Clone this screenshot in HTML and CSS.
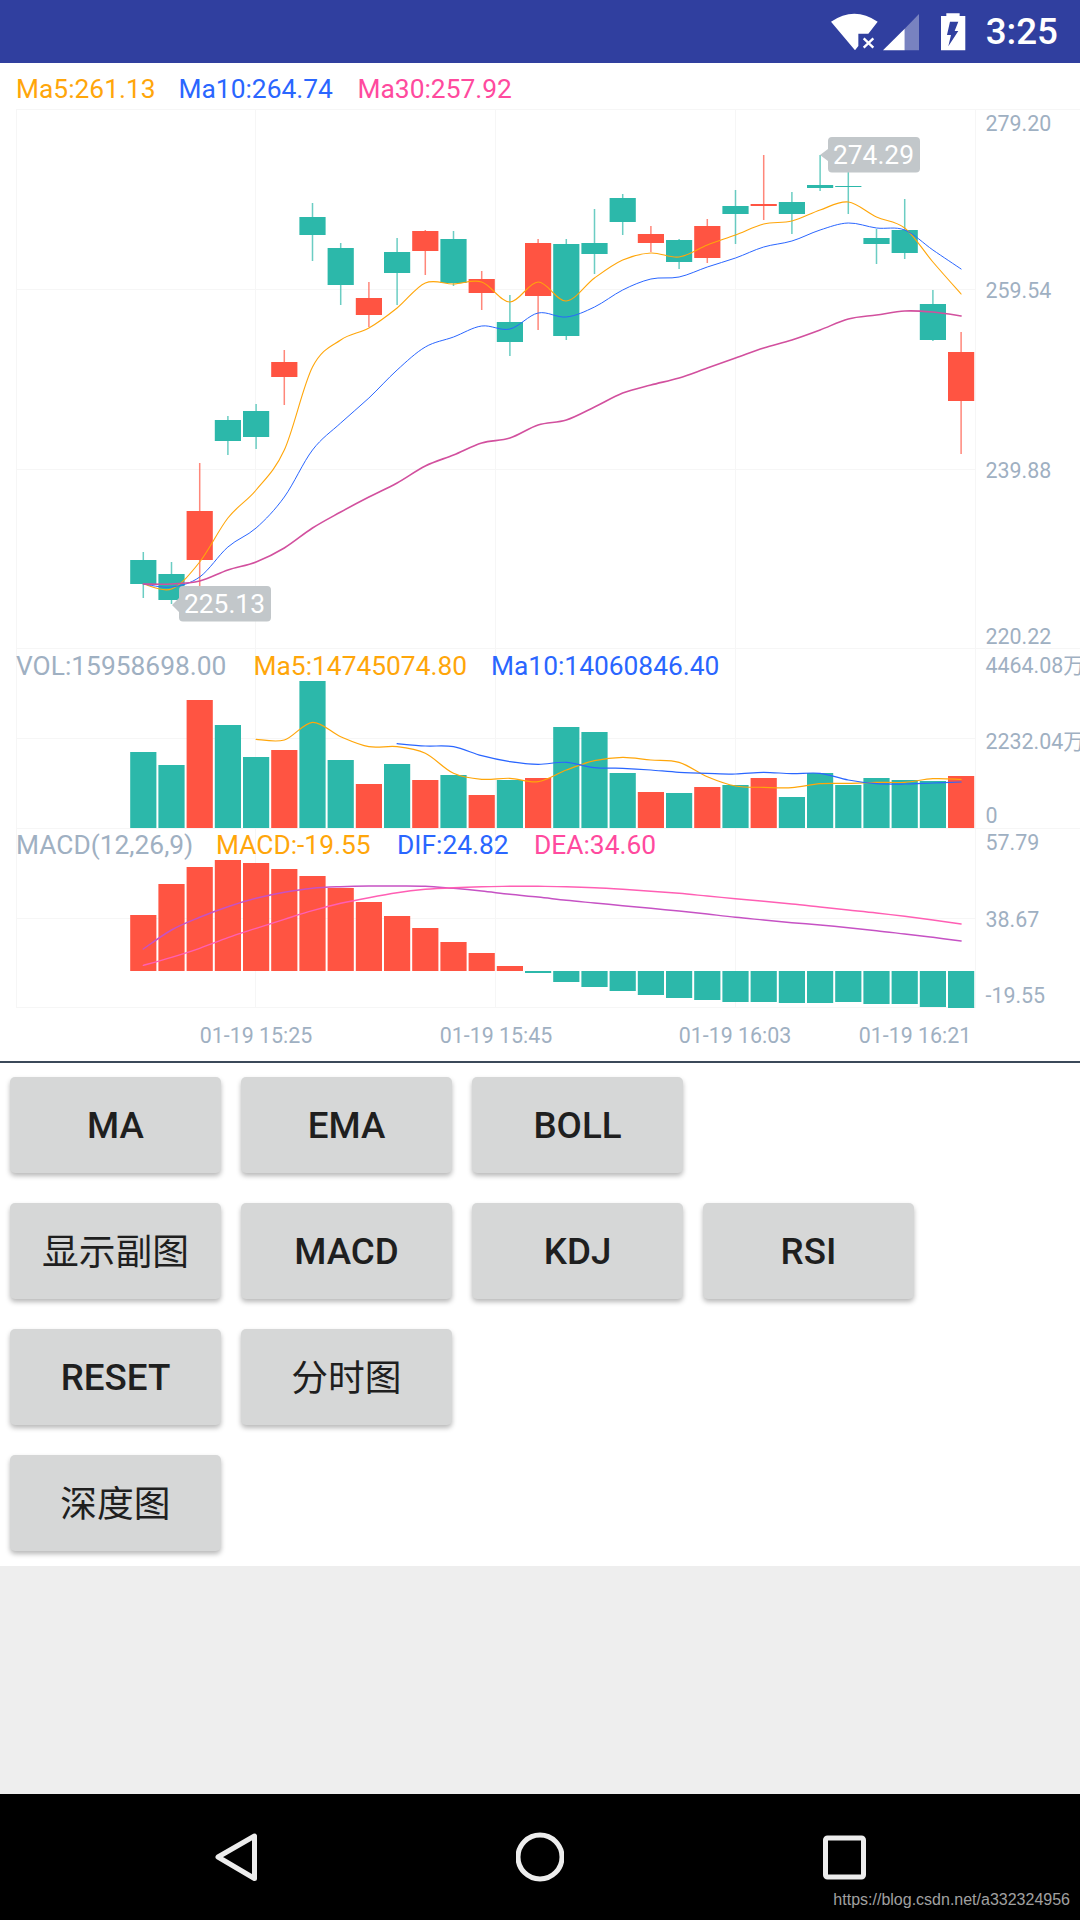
FILE: index.html
```html
<!DOCTYPE html>
<html lang="zh">
<head>
<meta charset="utf-8">
<title>KChart</title>
<link rel="stylesheet" href="styles.css">
</head>
<body>
<div class="screen">
  <header class="status">
    <svg class="ico-wifi" viewBox="158 36 140 114"><path class="w" d="M158 62Q228 14 298 62L270 98H240V135L230 148Z"/><path class="x" d="M256 112L285 140M285 112L256 140"/></svg>
    <svg class="ico-signal" viewBox="313 36 110 114"><path class="w" d="M313 148L378 83V148Z"/><path class="w dim" d="M378 83L423 37V148H378Z"/></svg>
    <svg class="ico-batt" viewBox="489 36 73 114"><path class="w" d="M505 37H545V45H562V148H489V45H505Z"/><path class="bolt" d="M516 62H541L530 90H541L511 136L519 102H507Z"/></svg>
    <span class="clock">3:25</span>
  </header>

  <section class="chart">
    <svg class="kline" viewBox="0 63 1080 998">
      <path class="grid" d="M16 109.500H1080M16 289.500H975M16 469.500H975M16 648.500H1080M16 738.500H975M16 828.500H1080M16 918.500H975M16 1007.500H975M16.500 109V1008M255.500 109V1008M495.500 109V1008M735.500 109V1008M975.500 109V1008"/>
      <g id="plots"></g>

      <text class="leg c-or" x="16" y="98">Ma5:261.13</text>
      <text class="leg c-bl" x="178.500" y="98">Ma10:264.74</text>
      <text class="leg c-pk" x="357.500" y="98">Ma30:257.92</text>

      <text class="leg c-ax" x="16" y="675">VOL:15958698.00</text>
      <text class="leg c-or" x="253.500" y="675">Ma5:14745074.80</text>
      <text class="leg c-bl" x="491" y="675">Ma10:14060846.40</text>

      <text class="leg c-ax" x="16" y="854">MACD(12,26,9)</text>
      <text class="leg c-or" x="216" y="854">MACD:-19.55</text>
      <text class="leg c-bl" x="397" y="854">DIF:24.82</text>
      <text class="leg c-pk" x="534" y="854">DEA:34.60</text>

      <text class="axis" x="985.500" y="131">279.20</text>
      <text class="axis" x="985.500" y="298">259.54</text>
      <text class="axis" x="985.500" y="478">239.88</text>
      <text class="axis" x="985.500" y="644">220.22</text>
      <text class="axis" x="985.500" y="673">4464.08万</text>
      <text class="axis" x="985.500" y="749">2232.04万</text>
      <text class="axis" x="985.500" y="823">0</text>
      <text class="axis" x="985.500" y="850">57.79</text>
      <text class="axis" x="985.500" y="927">38.67</text>
      <text class="axis" x="985.500" y="1003">-19.55</text>

      <text class="axis mid" x="256" y="1043">01-19 15:25</text>
      <text class="axis mid" x="496" y="1043">01-19 15:45</text>
      <text class="axis mid" x="735" y="1043">01-19 16:03</text>
      <text class="axis mid" x="915" y="1043">01-19 16:21</text>

      <path class="tip" d="M828 141a4 4 0 0 1 4-4h84a4 4 0 0 1 4 4v27.500a4 4 0 0 1-4 4h-84a4 4 0 0 1-4-4v-7.500l-8-6 8-6Z"/>
      <text class="leg c-wh" x="833" y="164">274.29</text>
      <path class="tip" d="M179 590a4 4 0 0 1 4-4h84a4 4 0 0 1 4 4v27.500a4 4 0 0 1-4 4h-84a4 4 0 0 1-4-4v-5.500l-7-7 7-7Z"/>
      <text class="leg c-wh" x="184" y="613">225.13</text>
    </svg>
  </section>

  <div class="divider"></div>

  <main class="controls">
    <div class="row">
      <button class="btn">MA</button>
      <button class="btn">EMA</button>
      <button class="btn">BOLL</button>
    </div>
    <div class="row">
      <button class="btn cjk">显示副图</button>
      <button class="btn">MACD</button>
      <button class="btn">KDJ</button>
      <button class="btn">RSI</button>
    </div>
    <div class="row">
      <button class="btn">RESET</button>
      <button class="btn cjk">分时图</button>
    </div>
    <div class="row">
      <button class="btn cjk">深度图</button>
    </div>
  </main>

  <div class="filler"></div>

  <nav class="nav">
    <svg class="nav-ico" viewBox="0 0 48 50"><path d="M42.500 4V46.500L6 25Z"/></svg>
    <svg class="nav-ico" viewBox="0 0 48 50"><circle cx="24" cy="25" r="22"/></svg>
    <svg class="nav-ico" viewBox="0 0 48 50"><rect x="5.500" y="6" width="38" height="39" rx="2"/></svg>
    <span class="mark">https://blog.csdn.net/a332324956</span>
  </nav>
</div>
<script src="chart.js"></script>
</body>
</html>
```

FILE: styles.css
```css
* { box-sizing: border-box; }
html, body { margin: 0; padding: 0; background: #fff; }
body { font-family: Roboto, "Noto Sans CJK SC", sans-serif; }
.screen { width: 1080px; height: 1920px; display: flex; flex-direction: column; overflow: hidden; }

.status { height: 63px; flex: none; background: #303F9F; display: flex; align-items: center; justify-content: flex-end; padding-right: 22px; }
.status svg { height: 38px; display: block; flex: none; }
.ico-wifi { width: 46.700px; margin-right: 5px; }
.ico-signal { width: 36.700px; margin-right: 22px; }
.ico-batt { width: 24.300px; margin-right: 20px; }
.w { fill: #fff; }
.dim { fill-opacity: .35; }
.x { stroke: #fff; stroke-width: 7; fill: none; }
.bolt { fill: #303F9F; }
.clock { color: #fff; font-size: 36.750px; font-weight: 500; line-height: 63px; }

.chart { height: 998px; flex: none; background: #fff; }
.kline { display: block; width: 1080px; height: 998px; }
.grid { stroke: #F6F6F6; stroke-width: 1; fill: none; }
.leg { font-family: Roboto, sans-serif; font-size: 26.350px; }
.axis { font-family: Roboto, "Noto Sans CJK SC", sans-serif; font-size: 21.400px; fill: #9FB0C2; }
.mid { text-anchor: middle; }
.c-or { fill: #FFA60A; }
.c-bl { fill: #2A66FF; }
.c-pk { fill: #FF4A9E; }
.c-ax { fill: #9FB0C2; }
.c-wh { fill: #fff; }
.tip { fill: #C2C7CA; }

.up { fill: #FF5442; }
.down { fill: #2CB8AA; }
.wick { fill-opacity: .7; }
.ln { fill: none; stroke-linecap: round; stroke-linejoin: round; }
.ma5 { stroke: #FFA60A; stroke-width: 1.100; }
.ma10 { stroke: #2A66FF; stroke-width: 1; }
.ma30 { stroke: #D2509E; stroke-width: 1.600; }
.vma5 { stroke: #FFA60A; stroke-width: 1.200; }
.vma10 { stroke: #2A66FF; stroke-width: 1.200; }
.dif { stroke: #C652C4; stroke-width: 1.500; }
.dea { stroke: #FF5FB4; stroke-width: 1.400; }

.divider { height: 2px; flex: none; background: #3B4959; }
.controls { flex: none; height: 503px; padding: 14px 10px 0; display: flex; flex-direction: column; gap: 30px; background: #fff; }
.row { display: flex; gap: 20px; }
.btn { width: 211px; height: 96px; border: 0; border-radius: 5px; padding: 0; background: #D6D7D7; color: #1F1F1F; box-shadow: 0 3px 5px rgba(0,0,0,.28); font-family: Roboto, "Noto Sans CJK SC", sans-serif; font-size: 36.750px; font-weight: 500; }
.cjk { font-weight: 400; font-family: "Noto Sans CJK SC", sans-serif; padding-bottom: 4px; }

.filler { flex: 1; background: #EEEEEE; }

.nav { position: relative; height: 126px; flex: none; background: #000; display: flex; align-items: center; justify-content: center; gap: 256px; }
.nav-ico { width: 48px; height: 50px; display: block; }
.nav-ico path, .nav-ico circle, .nav-ico rect { fill: none; stroke: #EDEDED; stroke-width: 5; stroke-linejoin: round; }
.mark { position: absolute; right: 10px; bottom: 11px; color: #A0A0A0; font-family: "Liberation Sans", Arial, sans-serif; font-size: 16px; line-height: 18px; white-space: nowrap; }
```

FILE: chart.js
```js
(function () {
  var NS = 'http://www.w3.org/2000/svg';
  var root = document.getElementById('plots');
  var PITCH = 28.2, LEFT = 130.2, W = 26.2;

  // [bodyTop, bodyBottom, wickTop, wickBottom, isRed]
  var K = [
    [560,584,552,598,0],[574,600,562,604,0],[511,560,463,586,1],[420,441,416,455,0],[411,437,404,449,0],
    [362,377,350,405,1],[217,235,203,261,0],[248,285,243,305,0],[298,315,282,327,1],[252,273,238,305,0],
    [231,251,230,275,1],[239,283,231,286,0],[279,293,271,310,1],[322,342,295,356,0],[243,296,239,330,1],
    [244,336,239,340,0],[243,254,209,274,0],[198,222,194,235,0],[234,243,226,252,1],[240,262,239,269,0],
    [226,258,219,263,1],[206,214,190,244,0],[204,206,155,220,1],[202,214,192,234,0],[185,188,155,191,0],
    [186,187,165,214,0],[238,244,229,264,0],[230,253,199,259,0],[304,340,290,341,0],[352,401,332,454,1]
  ];
  var MA5 = [584,589,562,518,490,450,367,340,328,308,283,284,282,302,282,301,278,260,253,257,245,235,224,221,210,202,217,228,262,294];
  var MA10 = [584,587,577,547,528,497,450,423,398,370,347,337,326,329,313,317,307,290,279,277,267,258,247,241,230,223,228,230,250,269];
  var MA30 = [584,584,581,570,562,548,528,512,497,483,466,455,443,438,425,420,407,393,385,378,368,358,348,340,330,319,315,311,312,316];

  // crop rows: y = 640 + v / 3
  var VOL = [336,375,180,255,351,330,123,360,432,372,420,405,465,420,414,261,276,399,456,459,441,435,414,471,399,435,414,420,423,408];
  var VM5 = [0,0,0,0,298,300,247,290,320,320,340,400,418,415,425,390,362,352,360,367,410,438,442,443,431,430,427,427,416,418];
  var VM10 = [0,0,0,0,0,0,0,0,0,311,318,320,347,365,373,367,383,385,390,397,400,402,397,401,400,420,431,432,429,426];
  var MACD = [825,732,681,660,669,687,708,744,786,828,864,906,939,978,999,1026,1041,1053,1065,1074,1080,1086,1086,1089,1089,1086,1092,1092,1101,1104];
  var DIF = [927,870,832,800,775,757,745,740,738,738,739,745,753,763,771,781,789,797,805,813,822,832,840,848,855,863,872,882,892,903];
  var DEA = [976,952,925,893,865,838,812,790,773,758,748,743,740,739,739,740,743,748,754,760,768,776,784,792,801,810,819,829,840,852];

  function conv(v) { return 640 + v / 3; }
  function el(name, attrs) {
    var n = document.createElementNS(NS, name);
    for (var k in attrs) n.setAttribute(k, attrs[k]);
    root.appendChild(n);
    return n;
  }
  function rect(x, y, w, h, cls) { el('rect', { x: x, y: y, width: w, height: h, 'class': cls }); }
  function left(i) { return LEFT + PITCH * i; }
  function cx(i) { return left(i) + W / 2; }

  function line(values, cls) {
    var pts = [];
    values.forEach(function (v, i) { if (v) pts.push([cx(i), v]); });
    var d = 'M' + pts[0][0].toFixed(1) + ' ' + pts[0][1].toFixed(1);
    for (var i = 0; i < pts.length - 1; i++) {
      var p0 = pts[i - 1] || pts[i], p1 = pts[i], p2 = pts[i + 1], p3 = pts[i + 2] || p2;
      d += 'C' + (p1[0] + (p2[0] - p0[0]) / 6).toFixed(1) + ' ' + (p1[1] + (p2[1] - p0[1]) / 6).toFixed(1) +
           ' ' + (p2[0] - (p3[0] - p1[0]) / 6).toFixed(1) + ' ' + (p2[1] - (p3[1] - p1[1]) / 6).toFixed(1) +
           ' ' + p2[0].toFixed(1) + ' ' + p2[1].toFixed(1);
    }
    el('path', { d: d, 'class': 'ln ' + cls });
  }

  K.forEach(function (c, i) {
    var col = c[4] ? 'up' : 'down';
    rect(cx(i) - 0.75, c[2], 1.5, c[3] - c[2], col + ' wick');
    rect(left(i), c[0], W, c[1] - c[0], col);
  });
  line(MA5, 'ma5');
  line(MA10, 'ma10');
  line(MA30, 'ma30');

  var volBase = 828;
  VOL.forEach(function (v, i) {
    var y = conv(v);
    rect(left(i), y, W, volBase - y, K[i][4] ? 'up' : 'down');
  });
  line(VM5.map(function (v) { return v && conv(v); }), 'vma5');
  line(VM10.map(function (v) { return v && conv(v); }), 'vma10');

  var zero = conv(993);
  MACD.forEach(function (v, i) {
    var y = conv(v);
    if (y < zero) rect(left(i), y, W, zero - y, 'up');
    else rect(left(i), zero, W, y - zero, 'down');
  });
  line(DIF.map(conv), 'dif');
  line(DEA.map(conv), 'dea');
})();
```
